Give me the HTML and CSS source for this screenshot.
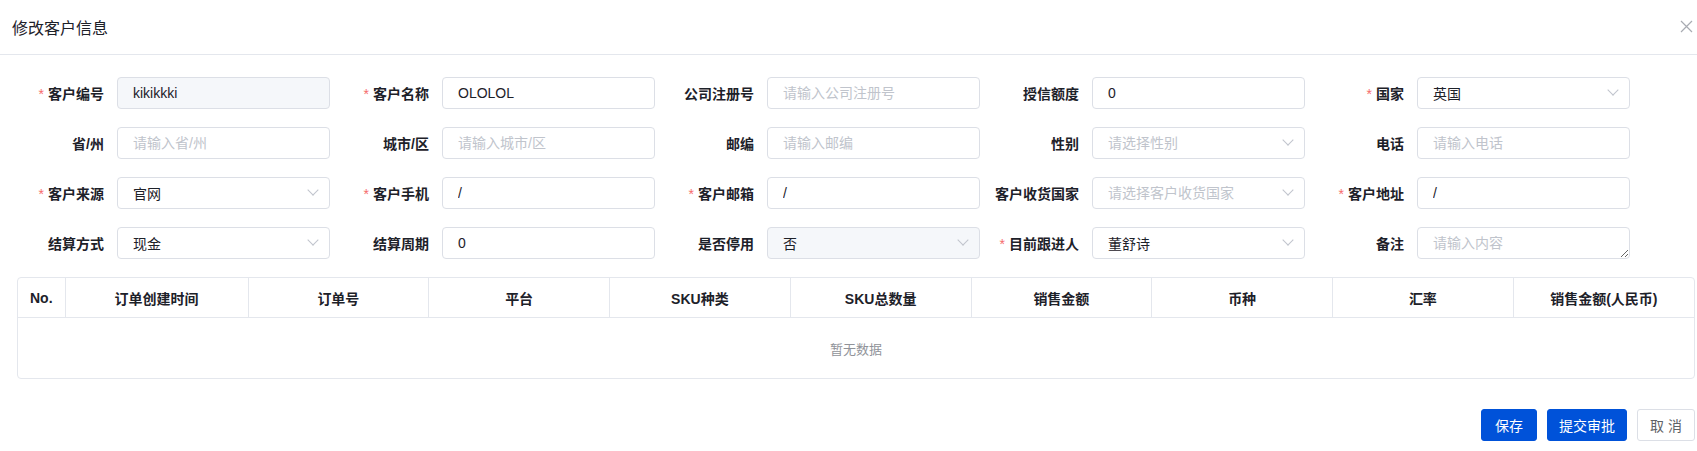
FILE: index.html
```html
<!DOCTYPE html>
<html lang="zh-CN">
<head>
    <meta charset="UTF-8">
    <title>修改客户信息</title>
    <link rel="stylesheet" href="styles.css">
</head>
<body>
    <div class="dialog">
        <div class="dialog-header">
            <span class="dialog-title">修改客户信息</span>
            <button class="close-btn" aria-label="关闭">
                <svg width="13" height="13" viewBox="0 0 13 13"><path d="M1 1L12 12M12 1L1 12" stroke="#a8abb2" stroke-width="1.2" fill="none"/></svg>
            </button>
        </div>

        <div class="dialog-body">
            <div class="form-grid">
                <div class="form-item">
                    <label class="required">客户编号</label>
                    <div class="control"><input class="input" value="kikikkki" disabled></div>
                </div>
                <div class="form-item">
                    <label class="required">客户名称</label>
                    <div class="control"><input class="input" value="OLOLOL"></div>
                </div>
                <div class="form-item">
                    <label>公司注册号</label>
                    <div class="control"><input class="input" placeholder="请输入公司注册号"></div>
                </div>
                <div class="form-item">
                    <label>授信额度</label>
                    <div class="control"><input class="input" value="0"></div>
                </div>
                <div class="form-item">
                    <label class="required">国家</label>
                    <div class="control select"><input class="input" value="英国" readonly><i class="arrow"></i></div>
                </div>

                <div class="form-item">
                    <label>省/州</label>
                    <div class="control"><input class="input" placeholder="请输入省/州"></div>
                </div>
                <div class="form-item">
                    <label>城市/区</label>
                    <div class="control"><input class="input" placeholder="请输入城市/区"></div>
                </div>
                <div class="form-item">
                    <label>邮编</label>
                    <div class="control"><input class="input" placeholder="请输入邮编"></div>
                </div>
                <div class="form-item">
                    <label>性别</label>
                    <div class="control select"><input class="input" placeholder="请选择性别" readonly><i class="arrow"></i></div>
                </div>
                <div class="form-item">
                    <label>电话</label>
                    <div class="control"><input class="input" placeholder="请输入电话"></div>
                </div>

                <div class="form-item">
                    <label class="required">客户来源</label>
                    <div class="control select"><input class="input" value="官网" readonly><i class="arrow"></i></div>
                </div>
                <div class="form-item">
                    <label class="required">客户手机</label>
                    <div class="control"><input class="input" value="/"></div>
                </div>
                <div class="form-item">
                    <label class="required">客户邮箱</label>
                    <div class="control"><input class="input" value="/"></div>
                </div>
                <div class="form-item">
                    <label>客户收货国家</label>
                    <div class="control select"><input class="input" placeholder="请选择客户收货国家" readonly><i class="arrow"></i></div>
                </div>
                <div class="form-item">
                    <label class="required">客户地址</label>
                    <div class="control"><input class="input" value="/"></div>
                </div>

                <div class="form-item">
                    <label>结算方式</label>
                    <div class="control select"><input class="input" value="现金" readonly><i class="arrow"></i></div>
                </div>
                <div class="form-item">
                    <label>结算周期</label>
                    <div class="control"><input class="input" value="0"></div>
                </div>
                <div class="form-item">
                    <label>是否停用</label>
                    <div class="control select"><input class="input" value="否" disabled><i class="arrow"></i></div>
                </div>
                <div class="form-item">
                    <label class="required">目前跟进人</label>
                    <div class="control select"><input class="input" value="董舒诗" readonly><i class="arrow"></i></div>
                </div>
                <div class="form-item">
                    <label>备注</label>
                    <div class="control"><textarea class="textarea" placeholder="请输入内容"></textarea></div>
                </div>
            </div>

            <div class="table-wrap">
                <table class="order-table">
                    <colgroup>
                        <col style="width: 47px">
                        <col style="width: 183px">
                        <col><col><col><col><col><col><col><col>
                    </colgroup>
                    <thead>
                        <tr>
                            <th>No.</th>
                            <th>订单创建时间</th>
                            <th>订单号</th>
                            <th>平台</th>
                            <th>SKU种类</th>
                            <th>SKU总数量</th>
                            <th>销售金额</th>
                            <th>币种</th>
                            <th>汇率</th>
                            <th>销售金额(人民币)</th>
                        </tr>
                    </thead>
                    <tbody>
                        <tr>
                            <td class="empty" colspan="10">暂无数据</td>
                        </tr>
                    </tbody>
                </table>
            </div>
        </div>

        <div class="dialog-footer">
            <button class="btn btn-primary">保存</button>
            <button class="btn btn-primary">提交审批</button>
            <button class="btn btn-default">取 消</button>
        </div>
    </div>
</body>
</html>
```

FILE: styles.css
```css
body {
    margin: 0;
    background: #fff;
    font-family: "Liberation Sans", "Noto Sans CJK SC", sans-serif;
    font-size: 14px;
    color: #1d2129;
}
.dialog {
    width: 1697px;
}
.dialog-header {
    height: 54px;
    border-bottom: 1px solid #e4e7ed;
    display: flex;
    align-items: center;
    justify-content: space-between;
    padding: 0 4px 0 12px;
}
.dialog-title {
    font-size: 16px;
    color: #1d2129;
}
.close-btn {
    border: none;
    background: none;
    padding: 0;
    width: 13px;
    height: 13px;
    cursor: pointer;
    margin-top: -2px;
}
.close-btn svg { display: block; }

.dialog-body {
    padding: 22px 2px 0 16px;
}
.form-grid {
    display: grid;
    grid-template-columns: repeat(5, 325px);
    row-gap: 18px;
}
.form-item {
    display: flex;
    align-items: center;
    height: 32px;
}
.form-item label {
    width: 101px;
    box-sizing: border-box;
    padding-right: 13px;
    text-align: right;
    font-weight: bold;
    color: #1d2129;
    white-space: nowrap;
}
.form-item label.required::before {
    content: "*";
    color: #f56c6c;
    font-weight: normal;
    margin-right: 4px;
}
.control {
    width: 213px;
    height: 32px;
    position: relative;
}
.input,
.textarea {
    width: 100%;
    height: 32px;
    box-sizing: border-box;
    border: 1px solid #dcdfe6;
    border-radius: 4px;
    padding: 0 15px;
    font-family: inherit;
    font-size: 14px;
    color: #1d2129;
    background: #fff;
    outline: none;
}
.input:disabled {
    background: #f5f7fa;
    color: #1d2129;
    -webkit-text-fill-color: #1d2129;
    opacity: 1;
}
.input::placeholder,
.textarea::placeholder {
    color: #c0c4cc;
}
.textarea {
    display: block;
    padding: 5px 15px;
    line-height: 20px;
    resize: vertical;
}
.select .input {
    padding-right: 30px;
    cursor: pointer;
}
.select .arrow {
    position: absolute;
    right: 13px;
    top: 9px;
    width: 7px;
    height: 7px;
    border-right: 1px solid #c0c4cc;
    border-bottom: 1px solid #c0c4cc;
    transform: rotate(45deg);
}

.table-wrap {
    margin-top: 18px;
    margin-left: 1px;
    border: 1px solid #e4e7ed;
    border-radius: 4px;
    overflow: hidden;
}
.order-table {
    width: 100%;
    table-layout: fixed;
    border-collapse: collapse;
}
.order-table th {
    height: 39px;
    padding: 0;
    font-weight: bold;
    color: #1d2129;
    text-align: center;
    border-left: 1px solid #e4e7ed;
    border-bottom: 1px solid #e4e7ed;
}
.order-table th:first-child { border-left: none; }
.order-table td.empty {
    height: 58px;
    text-align: center;
    color: #909399;
    font-size: 13px;
}

.dialog-footer {
    display: flex;
    justify-content: flex-end;
    gap: 10px;
    padding: 30px 2px 0 0;
}
.btn {
    box-sizing: border-box;
    height: 32px;
    min-width: 56px;
    padding: 0 11px;
    border: 1px solid #dcdfe6;
    border-radius: 3px;
    background: #fff;
    color: #606266;
    font-family: inherit;
    font-size: 14px;
    cursor: pointer;
}
.btn-default {
    padding: 0 12px;
}
.btn-primary {
    background: #0052d9;
    border-color: #0052d9;
    color: #fff;
}
```
